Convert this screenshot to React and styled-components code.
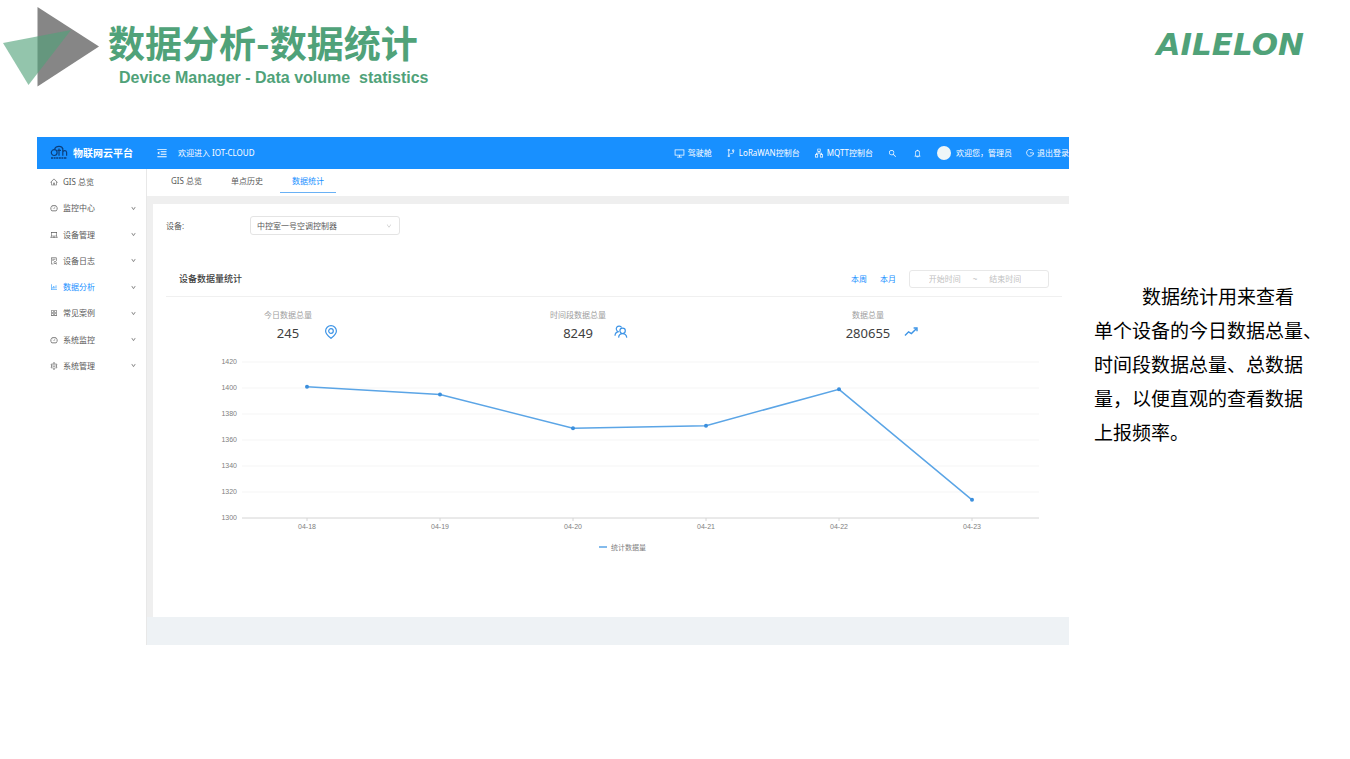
import React, { useState } from "react";
import styled, { createGlobalStyle } from "styled-components";
import {
  AiOutlineHome,
  AiOutlineDashboard,
  AiOutlineLaptop,
  AiOutlineFileSearch,
  AiOutlineBarChart,
  AiOutlineAppstore,
  AiOutlineSetting,
  AiOutlineMenuFold,
  AiOutlineDesktop,
  AiOutlineBranches,
  AiOutlineApartment,
  AiOutlineSearch,
  AiOutlineBell,
  AiOutlineDown,
} from "react-icons/ai";

const MENU = [
  { label: "GIS 总览", icon: AiOutlineHome },
  { label: "监控中心", icon: AiOutlineDashboard, nested: true },
  { label: "设备管理", icon: AiOutlineLaptop, nested: true },
  { label: "设备日志", icon: AiOutlineFileSearch, nested: true },
  { label: "数据分析", icon: AiOutlineBarChart, nested: true, active: true },
  { label: "常见案例", icon: AiOutlineAppstore, nested: true },
  { label: "系统监控", icon: AiOutlineDashboard, nested: true },
  { label: "系统管理", icon: AiOutlineSetting, nested: true },
];

const TABS = ["GIS 总览", "单点历史", "数据统计"];

const POINTS = [
  { day: "04-18", value: 1401 },
  { day: "04-19", value: 1395 },
  { day: "04-20", value: 1369 },
  { day: "04-21", value: 1371 },
  { day: "04-22", value: 1399 },
  { day: "04-23", value: 1314 },
];

const TICKS = [1420, 1400, 1380, 1360, 1340, 1320, 1300];

const SlideMark = () => (
  <svg width="98" height="84" viewBox="0 0 98 84" aria-hidden="true">
    <path d="M34.5 3 L96 42.5 L34.5 82.5 Z" fill="#868686" />
    <path d="M0 39 L68 26 L25.500 81 Z" fill="#50a279" fillOpacity="0.62" />
  </svg>
);

const PlatformLogo = () => (
  <svg width="18" height="16" viewBox="0 0 18 16" aria-hidden="true">
    <g fill="none" stroke="#0b3f7c" strokeWidth="1.2">
      <circle cx="4.2" cy="7.6" r="2.9" />
      <path d="M4.6 4 C6 0.8 12 0.4 12.8 4" />
      <path d="M9 3.4 V10.8 M7.4 5.4 H11" />
      <path d="M12.8 3.6 V10.8 M12.8 7 C13.4 5 16.6 5 16.6 7.4 V10.8" />
    </g>
    <path d="M1 13 H17" stroke="#0b3f7c" strokeWidth="1.4" strokeDasharray="2 0.6" />
  </svg>
);

const LogoutIcon = () => (
  <svg width="8" height="8" viewBox="0 0 8 8" fill="none" stroke="currentColor" strokeWidth="0.8">
    <path d="M6.6 1.6 A3.4 3.4 0 1 0 7.2 5" />
    <path d="M4 3.9 H7.6 V5.400" />
  </svg>
);

const PinIcon = () => (
  <svg width="14" height="14" viewBox="0 0 14 14" fill="none" stroke="#3d94e6" strokeWidth="1.2">
    <path d="M7 13.2 C4.2 10.9 1.6 8.9 1.6 5.9 A5.4 5.2 0 0 1 12.4 5.9 C12.4 8.9 9.8 10.9 7 13.2 Z" />
    <circle cx="7" cy="6" r="2.3" />
  </svg>
);

const PeopleIcon = () => (
  <svg width="14" height="14" viewBox="0 0 14 14" fill="none" stroke="#3d94e6" strokeWidth="1.2">
    <path d="M4.6 6.6 A2.8 2.8 0 1 1 7.6 2.6" />
    <path d="M1 10.8 C1 8.6 2.400 7 4.600 6.6" />
    <circle cx="8.6" cy="5.8" r="2.7" />
    <path d="M4.6 12.6 C4.800 10 6.2 8.6 8.6 8.6 C11 8.6 12.4 10 12.8 12.6" />
  </svg>
);

const TrendIcon = () => (
  <svg width="14" height="14" viewBox="0 0 14 14" fill="none" stroke="#3d94e6" strokeWidth="1.4">
    <path d="M1 10.6 L4.6 6.8 L7.4 8.6 L12.6 3.4" />
    <path d="M9.6 3 H13 V6.2" />
  </svg>
);

const STATS = [
  { label: "今日数据总量", value: "245", icon: PinIcon },
  { label: "时间段数据总量", value: "8249", icon: PeopleIcon },
  { label: "数据总量", value: "280655", icon: TrendIcon },
];

const xOf = index => 154 + index * 133;
const yOf = value => 17 + ((1420 - value) * 156) / 120;

const LineChart = () => (
  <ChartSvg viewBox="0 0 916 214" role="img" aria-label="统计数据量">
    {TICKS.map(tick => (
      <g key={tick}>
        <line
          x1="89"
          x2="886"
          y1={yOf(tick)}
          y2={yOf(tick)}
          stroke={tick === 1300 ? "#d4d4d4" : "#f5f5f5"}
        />
        <text x="84" y={yOf(tick) + 2} textAnchor="end">
          {tick}
        </text>
      </g>
    ))}
    <polyline
      points={POINTS.map((p, i) => `${xOf(i)},${yOf(p.value)}`).join(" ")}
      fill="none"
      stroke="#5ba5e6"
      strokeWidth="1.5"
    />
    {POINTS.map((p, i) => (
      <g key={p.day}>
        <line x1={xOf(i)} x2={xOf(i)} y1="173" y2="176" stroke="#d4d4d4" />
        <circle cx={xOf(i)} cy={yOf(p.value)} r="2" fill="#3b8fdd" />
        <text x={xOf(i)} y="184" textAnchor="middle">
          {p.day}
        </text>
      </g>
    ))}
    <line x1="446" x2="454" y1="202" y2="202" stroke="#5ba5e6" strokeWidth="1.5" />
    <text x="458" y="205">
      统计数据量
    </text>
  </ChartSvg>
);

const App = () => {
  const [tab, setTab] = useState("数据统计");
  return (
    <>
      <GlobalStyle />
      <SlideHeader>
        <SlideMark />
        <Titles>
          <Title>数据分析-数据统计</Title>
          <Subtitle>{"Device Manager - Data volume  statistics"}</Subtitle>
        </Titles>
        <Brand>AILELON</Brand>
      </SlideHeader>
      <SlideBody>
        <Dashboard>
          <TopBar>
            <Platform>
              <PlatformLogo />
              物联网云平台
            </Platform>
            <FoldButton aria-label="收起菜单">
              <AiOutlineMenuFold size={12} />
            </FoldButton>
            <span>欢迎进入 IOT-CLOUD</span>
            <TopActions>
              <TopLink href="#cockpit">
                <AiOutlineDesktop size={11} />
                驾驶舱
              </TopLink>
              <TopLink href="#lorawan">
                <AiOutlineBranches size={10} />
                LoRaWAN控制台
              </TopLink>
              <TopLink href="#mqtt">
                <AiOutlineApartment size={10} />
                MQTT控制台
              </TopLink>
              <IconButton aria-label="搜索">
                <AiOutlineSearch size={9} />
              </IconButton>
              <IconButton aria-label="通知">
                <AiOutlineBell size={9} />
              </IconButton>
              <User>
                <Avatar />
                欢迎您，管理员
              </User>
              <TopLink href="#logout">
                <LogoutIcon />
                退出登录
              </TopLink>
            </TopActions>
          </TopBar>
          <Workspace>
            <Sidebar>
              {MENU.map(({ label, icon: Icon, nested, active }) => (
                <MenuItem href="#menu" key={label} $active={active}>
                  <Icon size={8} />
                  {label}
                  {nested && <MenuArrow size={5} />}
                </MenuItem>
              ))}
            </Sidebar>
            <Content>
              <Tabs>
                {TABS.map(name => (
                  <Tab key={name} $active={name === tab} onClick={() => setTab(name)}>
                    {name}
                  </Tab>
                ))}
              </Tabs>
              <Card>
                <DeviceRow>
                  <label htmlFor="device">设备:</label>
                  <SelectBox>
                    <Select id="device">
                      <option>中控室一号空调控制器</option>
                    </Select>
                    <AiOutlineDown size={6} />
                  </SelectBox>
                </DeviceRow>
                <SectionHead>
                  <SectionTitle>设备数据量统计</SectionTitle>
                  <RangeButton>本周</RangeButton>
                  <RangeButton>本月</RangeButton>
                  <DateRange>
                    <DateInput placeholder="开始时间" aria-label="开始时间" />
                    ~
                    <DateInput placeholder="结束时间" aria-label="结束时间" />
                  </DateRange>
                </SectionHead>
                <Stats>
                  {STATS.map(({ label, value, icon: Icon }) => (
                    <Stat key={label}>
                      <StatText>
                        <StatLabel>{label}</StatLabel>
                        <StatValue>{value}</StatValue>
                      </StatText>
                      <Icon />
                    </Stat>
                  ))}
                </Stats>
                <LineChart />
              </Card>
            </Content>
          </Workspace>
        </Dashboard>
        <Note>
          数据统计用来查看
          <br />
          单个设备的今日数据总量、
          <br />
          时间段数据总量、总数据
          <br />
          量，以便直观的查看数据
          <br />
          上报频率。
        </Note>
      </SlideBody>
    </>
  );
};

const GlobalStyle = createGlobalStyle`
  * {
    box-sizing: border-box;
  }
  body {
    margin: 0;
    background-color: white;
    font-family: "Noto Sans", "Noto Sans CJK SC", sans-serif;
  }
  button, input, select {
    font: inherit;
    color: inherit;
    border: none;
    padding: 0;
    background: none;
  }
  a {
    color: inherit;
    text-decoration: none;
  }
  svg {
    flex: none;
  }
`;

const SlideHeader = styled.header`
  display: flex;
  align-items: flex-start;
  padding: 4px 46px 0 3px;
  height: 137px;
`;

const Titles = styled.div`
  flex: 1;
  padding: 16px 0 0 7px;
  color: #50a279;
`;

const Title = styled.h1`
  margin: 0;
  font: bold 37px/44px "Noto Sans CJK SC", sans-serif;
`;

const Subtitle = styled.p`
  margin: 0;
  padding-left: 11px;
  font: bold 16px/28px "Liberation Sans", sans-serif;
  white-space: pre;
`;

const Brand = styled.div`
  padding-top: 20px;
  font: italic bold 31px/40px "DejaVu Sans", sans-serif;
  color: #50a279;
`;

const SlideBody = styled.main`
  display: flex;
  align-items: flex-start;
  padding-left: 37px;
`;

const Dashboard = styled.section`
  flex: 1;
  min-width: 0;
  font-size: 8px;
  line-height: 12px;
  color: #595959;
`;

const TopBar = styled.div`
  display: flex;
  align-items: center;
  height: 32px;
  background-color: #1890ff;
  color: white;
  white-space: nowrap;
`;

const Platform = styled.div`
  display: flex;
  align-items: center;
  gap: 5px;
  width: 119px;
  padding-left: 13px;
  font-size: 10px;
  font-weight: bold;
`;

const FoldButton = styled.button`
  display: flex;
  margin-right: 10px;
`;

const TopActions = styled.div`
  display: flex;
  align-items: center;
  gap: 14px;
  margin-left: auto;
`;

const TopLink = styled.a`
  display: flex;
  align-items: center;
  gap: 3px;
`;

const IconButton = styled.button`
  display: flex;
  padding: 0 1px;
`;

const User = styled.div`
  display: flex;
  align-items: center;
  gap: 5px;
`;

const Avatar = styled.span`
  width: 14px;
  height: 14px;
  border-radius: 50%;
  background-color: #eef6f8;
`;

const Workspace = styled.div`
  display: flex;
  min-height: 476px;
`;

const Sidebar = styled.nav`
  display: grid;
  grid-template-rows: repeat(8, 1fr);
  width: 109px;
  height: 210px;
`;

const MenuItem = styled.a`
  display: flex;
  align-items: center;
  gap: 5px;
  padding: 0 10px 0 13px;
  color: ${props => (props.$active ? "#1890ff" : "#595959")};
`;

const MenuArrow = styled(AiOutlineDown)`
  margin-left: auto;
  color: #737373;
  stroke: currentColor;
  stroke-width: 60;
`;

const Content = styled.div`
  flex: 1;
  min-width: 0;
  border-left: 1px solid #e8e8e8;
  background-color: #eef2f5;
`;

const Tabs = styled.div`
  display: flex;
  height: 27px;
  padding-left: 12px;
  background-color: white;
`;

const Tab = styled.button`
  height: 24px;
  padding: 0 12px;
  margin-right: 5px;
  border-bottom: 1px solid ${props => (props.$active ? "#69b1f5" : "transparent")};
  color: ${props => (props.$active ? "#1890ff" : "#595959")};
`;

const Card = styled.div`
  min-height: 421px;
  border: solid #efefef;
  border-width: 8px 0 0 6px;
  background-color: white;
`;

const DeviceRow = styled.div`
  display: flex;
  align-items: center;
  padding: 12px 13px 0;
  label {
    width: 84px;
  }
`;

const SelectBox = styled.div`
  display: flex;
  align-items: center;
  width: 150px;
  height: 19px;
  padding-right: 7px;
  border: 1px solid #e4e4e4;
  border-radius: 3px;
  color: #bfbfbf;
`;

const Select = styled.select`
  flex: 1;
  height: 17px;
  padding-left: 6px;
  appearance: none;
  outline: none;
  color: #595959;
`;

const SectionHead = styled.div`
  display: flex;
  align-items: center;
  gap: 13px;
  height: 36px;
  margin: 26px 7px 0 13px;
  padding: 0 13px;
  border-bottom: 1px solid #f0f0f0;
`;

const SectionTitle = styled.h2`
  flex: 1;
  margin: 0;
  font-size: 9px;
  font-weight: 500;
  color: #404040;
`;

const RangeButton = styled.button`
  color: #1890ff;
`;

const DateRange = styled.div`
  display: flex;
  align-items: center;
  justify-content: center;
  gap: 12px;
  width: 140px;
  height: 18px;
  padding-right: 8px;
  border: 1px solid #e8e8e8;
  border-radius: 3px;
  color: #bfbfbf;
`;

const DateInput = styled.input`
  width: 32px;
  height: 16px;
  outline: none;
  &::placeholder {
    color: #bfbfbf;
  }
`;

const Stats = styled.div`
  display: grid;
  grid-template-columns: repeat(3, 1fr);
  padding: 12px 46px 0 0;
`;

const Stat = styled.div`
  display: flex;
  align-items: flex-end;
  justify-content: center;
  gap: 6px;
  svg {
    margin-bottom: 6px;
  }
`;

const StatText = styled.div`
  width: 60px;
  text-align: center;
`;

const StatLabel = styled.div`
  color: #a0a0a0;
`;

const StatValue = styled.div`
  font-size: 13px;
  line-height: 24px;
  color: #404040;
`;

const ChartSvg = styled.svg`
  display: block;
  width: 100%;
  text {
    font: 7px "Liberation Sans", "Noto Sans CJK SC", sans-serif;
    fill: #808080;
  }
`;

const Note = styled.p`
  width: 281px;
  margin: 142px 0 0;
  padding-left: 25px;
  font: 19px/34px "Noto Sans CJK SC", sans-serif;
  color: black;
  text-indent: 48px;
  white-space: nowrap;
`;

export default App;
